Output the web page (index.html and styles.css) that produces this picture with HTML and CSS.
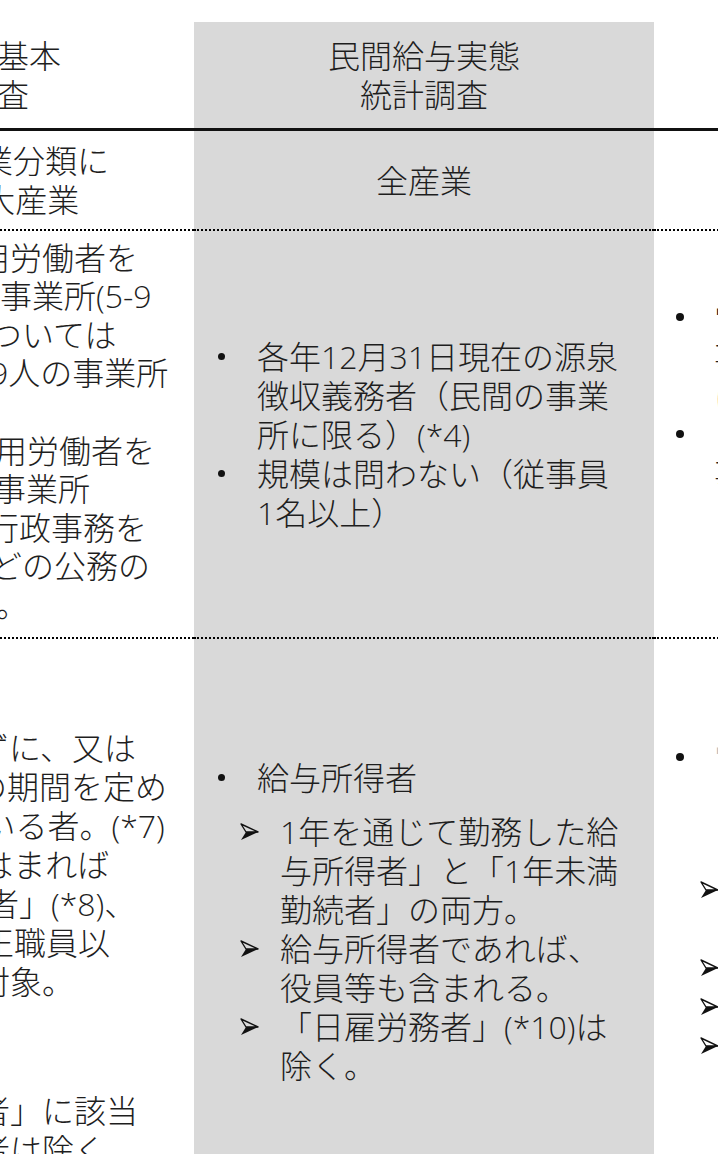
FILE: index.html
```html
<!DOCTYPE html>
<html lang="ja">
<head>
<meta charset="utf-8">
<title>統計調査の比較</title>
<link rel="stylesheet" href="styles.css">
</head>
<body>
<div class="table">
  <!-- header row -->
  <div class="cell head col-left center">賃金構造基本<br>統計調査</div>
  <div class="cell head col-mid center">民間給与実態<br>統計調査</div>
  <div class="cell head col-right center">毎月勤労<br>統計調査</div>

  <!-- industry row -->
  <div class="cell r2 col-left center">日本標準産業分類に<br>基づく16大産業</div>
  <div class="cell r2 col-mid center">全産業</div>
  <div class="cell r2 col-right center">16大産業</div>

  <!-- establishment row -->
  <div class="cell r3 col-left lines l3">
    <div class="p10">・５人以上の常用労働者を</div>
    <div>　を雇用する民営事業所(5-9</div>
    <div class="m10">　人規模事業所については</div>
    <div class="m10">　企業規模が５～9人の事業所</div>
    <div>　に限る）</div>
    <div class="m5">・１０人以上の常用労働者を</div>
    <div class="m6">　雇用する公営の事業所</div>
    <div class="m13">　※国・自治体の行政事務を</div>
    <div class="m10">　を行う事業所などの公務の</div>
    <div class="m4">　事業所は対象外。</div>
  </div>
  <div class="cell r3 col-mid">
    <ul class="list">
      <li><span class="mk"><span class="dot"></span></span><span>各年12月31日現在の源泉<br>徴収義務者（民間の事業<br>所に限る）(*4)</span></li>
      <li><span class="mk"><span class="dot"></span></span><span>規模は問わない（従事員<br>1名以上）</span></li>
    </ul>
  </div>
  <div class="cell r3 col-right">
    <ul class="list">
      <li><span class="mk"><span class="dot"></span></span><span>常用労働者5人以上の<br>事業所（うち30人以上<br>は全数調査）</span></li>
      <li><span class="mk"><span class="dot"></span></span><span>「国・地方公共団体の<br>事業所も含む<br>「公務を含む」<br>「*5」</span></li>
    </ul>
  </div>

  <!-- worker row -->
  <div class="cell r4 col-left lines top-left">
    <div class="m23">・雇用期間を定めずに、又は</div>
    <div class="m25">　かつ１か月以上の期間を定め</div>
    <div class="m14">　て常時雇われている者。(*7)</div>
    <div class="m18">・上記条件に当てはまれば</div>
    <div class="m13">　も「短時間労働者」(*8)、</div>
    <div class="m18">　臨時労働者など正職員以</div>
    <div class="p10">　外の雇用者も対象。</div>
    <div class="blank">&nbsp;</div>
    <div class="blank">&nbsp;</div>
    <div class="gap m22">・但し「臨時労働者」に該当</div>
    <div class="m22">　する日雇い労働者は除く</div>
    <div>　（*9）</div>
  </div>
  <div class="cell r4 col-mid top-mid">
    <ul class="list">
      <li><span class="mk"><span class="dot"></span></span><span>給与所得者</span></li>
    </ul>
    <ul class="sub">
      <li><span class="arrow"><svg viewBox="0 0 19 18" width="19" height="18"><path d="M1 1 L18 9 L6 9 Z" fill="none" stroke="#111" stroke-width="1.4" stroke-linejoin="round"/><path d="M1 17 L18 9 L6 9 Z" fill="#111"/></svg></span><span>1年を通じて勤務した給<br>与所得者」と「1年未満<br>勤続者」の両方。</span></li>
      <li><span class="arrow"><svg viewBox="0 0 19 18" width="19" height="18"><path d="M1 1 L18 9 L6 9 Z" fill="none" stroke="#111" stroke-width="1.4" stroke-linejoin="round"/><path d="M1 17 L18 9 L6 9 Z" fill="#111"/></svg></span><span>給与所得者であれば、<br>役員等も含まれる。</span></li>
      <li><span class="arrow"><svg viewBox="0 0 19 18" width="19" height="18"><path d="M1 1 L18 9 L6 9 Z" fill="none" stroke="#111" stroke-width="1.4" stroke-linejoin="round"/><path d="M1 17 L18 9 L6 9 Z" fill="#111"/></svg></span><span>「日雇労務者」(*10)は<br>除く。</span></li>
    </ul>
  </div>
  <div class="cell r4 col-right top-right">
    <ul class="list">
      <li><span class="mk"><span class="dot"></span></span><span class="faint">常用労働者<br>「*11」<br>「が対象」</span></li>
    </ul>
    <ul class="sub">
      <li><span class="arrow"><svg viewBox="0 0 19 18" width="19" height="18"><path d="M1 1 L18 9 L6 9 Z" fill="none" stroke="#111" stroke-width="1.4" stroke-linejoin="round"/><path d="M1 17 L18 9 L6 9 Z" fill="#111"/></svg></span><span>期間を定めずに<br>雇われている者</span></li>
      <li><span class="arrow"><svg viewBox="0 0 19 18" width="19" height="18"><path d="M1 1 L18 9 L6 9 Z" fill="none" stroke="#111" stroke-width="1.4" stroke-linejoin="round"/><path d="M1 17 L18 9 L6 9 Z" fill="#111"/></svg></span><span>役員を含まない</span></li>
      <li><span class="arrow"><svg viewBox="0 0 19 18" width="19" height="18"><path d="M1 1 L18 9 L6 9 Z" fill="none" stroke="#111" stroke-width="1.4" stroke-linejoin="round"/><path d="M1 17 L18 9 L6 9 Z" fill="#111"/></svg></span><span>パートを含む</span></li>
      <li><span class="arrow"><svg viewBox="0 0 19 18" width="19" height="18"><path d="M1 1 L18 9 L6 9 Z" fill="none" stroke="#111" stroke-width="1.4" stroke-linejoin="round"/><path d="M1 17 L18 9 L6 9 Z" fill="#111"/></svg></span><span>日雇を除く</span></li>
    </ul>
  </div>
</div>
</body>
</html>
```
FILE: styles.css
```css
html, body {
  margin: 0;
  padding: 0;
  background: #fff;
}
body {
  width: 718px;
  height: 1154px;
  overflow: hidden;
  font-family: "Open Sans", "Noto Sans CJK JP", sans-serif;
  font-weight: 300;
  font-size: 32px;
  line-height: 39px;
  color: #1e1e1e;
}
.table {
  display: grid;
  grid-template-columns: 458px 460px 400px;
  grid-template-rows: 109px 100px 408px 700px;
  margin-top: 22px;
  margin-left: -264px;
  width: 1318px;
}
.cell {
  box-sizing: border-box;
  display: flex;
  flex-direction: column;
  justify-content: center;
  white-space: nowrap;
}
.col-mid {
  background: #d9d9d9;
}
.head {
  border-bottom: 3px solid #111;
}
.r2, .r3 {
  border-bottom: 2px dotted #000;
}
.center {
  text-align: center;
}
.lines {
  padding-left: 8px;
  text-align: left;
}
.l3 {
  line-height: 38.6px;
  padding-bottom: 5px;
}
/* horizontal offsets of clipped lines */
.p10 { margin-left: 10px; }
.m4 { margin-left: -4px; }
.m5 { margin-left: -5px; }
.m6 { margin-left: -6px; }
.m10 { margin-left: -10px; }
.m13 { margin-left: -13px; }
.m14 { margin-left: -14px; }
.m18 { margin-left: -18px; }
.m22 { margin-left: -22px; }
.m23 { margin-left: -23px; }
.m25 { margin-left: -25px; }

.top-left {
  justify-content: flex-start;
  padding-top: 89px;
}
.top-mid {
  justify-content: flex-start;
  padding-top: 119px;
}
.top-right {
  justify-content: flex-start;
  padding-top: 98px;
}
.gap {
  margin-top: 12px;
}
.list, .sub {
  list-style: none;
  margin: 0;
  padding: 0;
}
.col-mid .list {
  padding-left: 24px;
}
.col-right .list {
  padding-left: 22px;
}
.list li, .sub li {
  display: flex;
  align-items: flex-start;
}
.mk {
  flex: none;
  width: 39px;
  height: 39px;
  display: flex;
  align-items: center;
}
.col-right .mk {
  width: 38px;
}
.dot {
  width: 7px;
  height: 7px;
  border-radius: 50%;
  background: #111;
}
.col-right .dot {
  width: 8px;
  height: 8px;
}
.faint {
  color: #bbb;
}
.sub {
  margin-top: 15px;
}
.col-mid .sub {
  padding-left: 46px;
}
.col-right .sub {
  padding-left: 46px;
  margin-top: 16px;
}
.arrow {
  flex: none;
  width: 40px;
  height: 39px;
  display: flex;
  align-items: center;
}
.arrow svg {
  display: block;
}
```
